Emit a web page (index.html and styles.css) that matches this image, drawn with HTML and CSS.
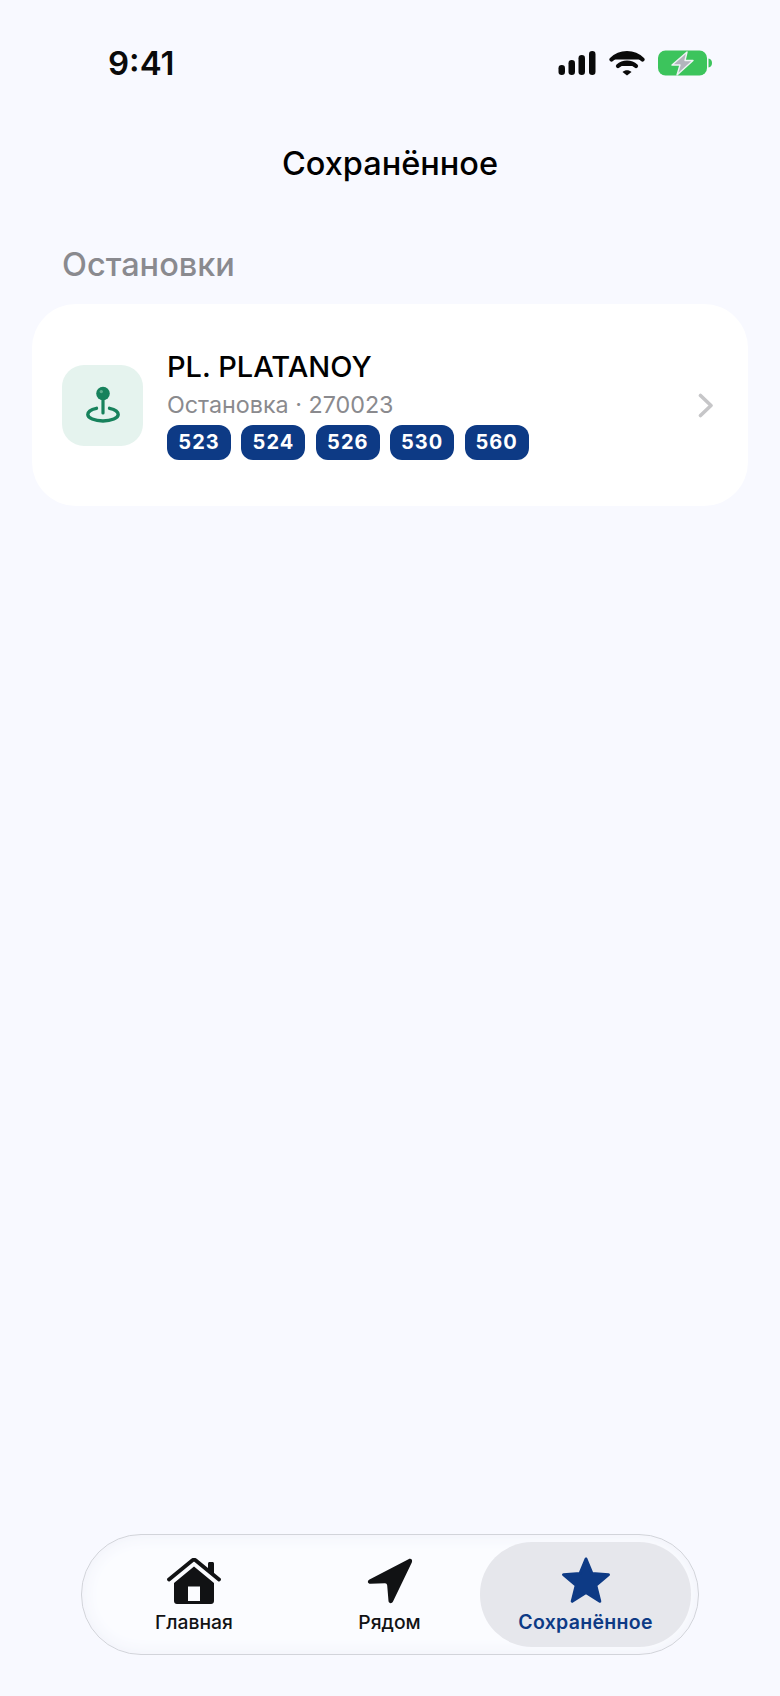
FILE: index.html
```html
<!DOCTYPE html>
<html lang="ru">
<head>
    <meta charset="UTF-8">
    <meta name="viewport" content="width=device-width, initial-scale=1.0">
    <title>Сохранённое</title>
    <link rel="stylesheet" href="styles.css">
</head>
<body>
    <div class="screen">
        <div class="status">
            <span class="time">9:41</span>
            <div class="status-icons">
                <svg width="38" height="24" viewBox="0 0 38 24"><rect x="0.500" y="14" width="6.500" height="10" rx="3.200"/><rect x="10.500" y="9" width="6.500" height="15" rx="3.200"/><rect x="20.500" y="4" width="6.500" height="20" rx="3.200"/><rect x="31" y="0" width="6.500" height="24" rx="3.200"/></svg>
                <svg width="36" height="26" viewBox="0 0 36 26" fill="none" stroke="#0a0a0a" stroke-width="4.200" stroke-linecap="round"><path d="M2.500 9.500C11 1 25 1 33.500 9.500"/><path d="M9 16C14 11.300 22 11.300 27 16"/><path d="M13.500 22L18 25.500L22.500 22C20 19.600 16 19.600 13.500 22Z" fill="#0a0a0a" stroke="none"/></svg>
                <svg width="54" height="26" viewBox="0 0 54 26"><rect x="0" y="0.500" width="49" height="25" rx="7.500" fill="#3cc45c"/><path d="M50.500 8.500C52.800 9 54 10.500 54 13C54 15.500 52.800 17 50.500 17.500Z" fill="#3cc45c"/><path d="M29 2L14 15H22L19 25L35 10.500H27Z" fill="#b2b5bd" stroke="#eef3f4" stroke-width="1.400" stroke-linejoin="round"/></svg>
            </div>
        </div>

        <h1 class="page-title">Сохранённое</h1>

        <main class="content">
            <h2 class="section-title">Остановки</h2>
            <div class="card">
                <div class="stop-icon">
                    <svg width="36" height="38" viewBox="0 0 36 38" fill="none"><circle cx="18" cy="7.500" r="6.800" fill="#17825c"/><circle cx="16.300" cy="5.600" r="1.700" fill="#5fae8e"/><path d="M18 12V27" stroke="#17825c" stroke-width="3.200" stroke-linecap="round"/><path d="M11.500 22.300C6.300 23.400 2.800 25.500 2.800 28.500C2.800 32 9.500 35 18 35C26.500 35 33.200 32 33.200 28.500C33.200 25.500 29.700 23.400 24.500 22.300" stroke="#17825c" stroke-width="3.400" stroke-linecap="round"/></svg>
                </div>
                <div class="stop-info">
                    <div class="stop-name">PL. PLATANOY</div>
                    <div class="stop-sub">Остановка · 270023</div>
                    <div class="routes">
                        <span class="route">523</span>
                        <span class="route">524</span>
                        <span class="route">526</span>
                        <span class="route">530</span>
                        <span class="route">560</span>
                    </div>
                </div>
                <svg class="chevron" width="16" height="25" viewBox="0 0 16 25" fill="none"><path d="M2.500 2.500L13 12.500L2.500 22.500" stroke="#c6c6c8" stroke-width="3.600" stroke-linecap="round" stroke-linejoin="round"/></svg>
            </div>
        </main>

        <nav class="tabbar">
            <div class="tab">
                <svg width="54" height="46" viewBox="0 0 54 46"><path d="M41 5.500C41 4.700 41.700 4 42.500 4H45.500C46.300 4 47 4.700 47 5.500V19L41 14Z" fill="#111214"/><path d="M2 21.500L25.500 2.300C26.400 1.600 27.600 1.600 28.500 2.300L52 21.500" fill="none" stroke="#111214" stroke-width="3.800" stroke-linecap="round" stroke-linejoin="round"/><path fill-rule="evenodd" d="M27 8.500L47 25V43C47 44.700 45.700 46 44 46H10C8.300 46 7 44.700 7 43V25ZM21 28.500V43H33V28.500Z" fill="#111214"/></svg>
                <span class="tab-label">Главная</span>
            </div>
            <div class="tab">
                <svg width="46" height="46" viewBox="0 0 46 46"><path d="M2.500 21.500L41.500 1.200C44 0 46 2 44.800 4.500L26 43.500C24.800 46 21.800 45.500 21.500 43L20.200 27.500C20 26 19.200 25.500 18 25.300L3.500 25.800C0.500 25.800 0 23 2.500 21.500Z" fill="#111214"/></svg>
                <span class="tab-label">Рядом</span>
            </div>
            <div class="tab tab-active">
                <svg width="50" height="47" viewBox="0 0 50 47"><path d="M25 2L31 16.500L47.500 17.700L34.800 28.300L38.800 44.300L25 35.500L11.200 44.300L15.200 28.300L2.500 17.700L19 16.500Z" fill="#0d3a85" stroke="#0d3a85" stroke-width="3" stroke-linejoin="round"/></svg>
                <span class="tab-label">Сохранённое</span>
            </div>
        </nav>
    </div>
</body>
</html>
```

FILE: styles.css
```css
* {
    box-sizing: border-box;
}

body {
    margin: 0;
    background: #f8f9ff;
    color: #000;
    font-family: Inter, "Liberation Sans", sans-serif;
}

.screen {
    display: flex;
    flex-direction: column;
    height: 1696px;
    width: 780px;
    overflow: hidden;
}

.status {
    display: flex;
    align-items: center;
    justify-content: space-between;
    height: 26px;
    margin-top: 50px;
    padding: 0 68px 0 108px;
}

.time {
    font-size: 33px;
    font-weight: 600;
    color: #0a0a0a;
}

.status-icons {
    display: flex;
    align-items: center;
    gap: 13px;
}

.status-icons svg {
    display: block;
    fill: #0a0a0a;
}

.page-title {
    margin: 68px 0 0;
    text-align: center;
    font-size: 32.500px;
    line-height: 40px;
    font-weight: 500;
}

.content {
    flex: 1;
    padding: 0 32px;
}

.section-title {
    margin: 61px 0 0 30px;
    font-size: 32.500px;
    line-height: 40px;
    font-weight: 500;
    color: #8a8a8f;
}

.card {
    display: flex;
    align-items: center;
    height: 202px;
    margin-top: 19px;
    padding: 0 34px 0 30px;
    background: #fff;
    border-radius: 44px;
}

.stop-icon {
    display: flex;
    align-items: center;
    justify-content: center;
    flex: none;
    width: 81px;
    height: 81px;
    border-radius: 22px;
    background: #e5f3ee;
}

.stop-info {
    flex: 1;
    margin-left: 24px;
}

.stop-name {
    font-size: 29px;
    line-height: 34px;
    font-weight: 500;
}

.stop-sub {
    margin-top: 7px;
    font-size: 23.300px;
    line-height: 28px;
    color: #8a8a8e;
}

.routes {
    display: flex;
    gap: 10.400px;
    margin-top: 6px;
}

.route {
    width: 64px;
    height: 35px;
    border-radius: 12px;
    background: #0d3a85;
    color: #fff;
    font-size: 20px;
    font-weight: 700;
    line-height: 35px;
    letter-spacing: 1px;
    text-align: center;
}

.tabbar {
    display: grid;
    grid-template-columns: 210px 1fr 211px;
    align-items: stretch;
    width: 618px;
    height: 121px;
    margin: 0 0 41px 81px;
    padding: 7px;
    border: 1px solid #d2d4da;
    border-radius: 60px;
    background: #fbfcff;
    box-shadow: inset 0 0 18px #eef0f8;
}

.tab {
    display: flex;
    flex-direction: column;
    align-items: center;
    justify-content: flex-end;
    padding-bottom: 13px;
    border-radius: 52px;
}

.tab svg {
    display: block;
}

.tab-label {
    margin-top: 7px;
    font-size: 19.300px;
    line-height: 23px;
    font-weight: 500;
    color: #111214;
}

.tab-active {
    background: #e6e7ec;
}

.tab-active .tab-label {
    font-size: 19.500px;
    font-weight: 600;
    letter-spacing: 0.300px;
    color: #0d3a85;
}
```
